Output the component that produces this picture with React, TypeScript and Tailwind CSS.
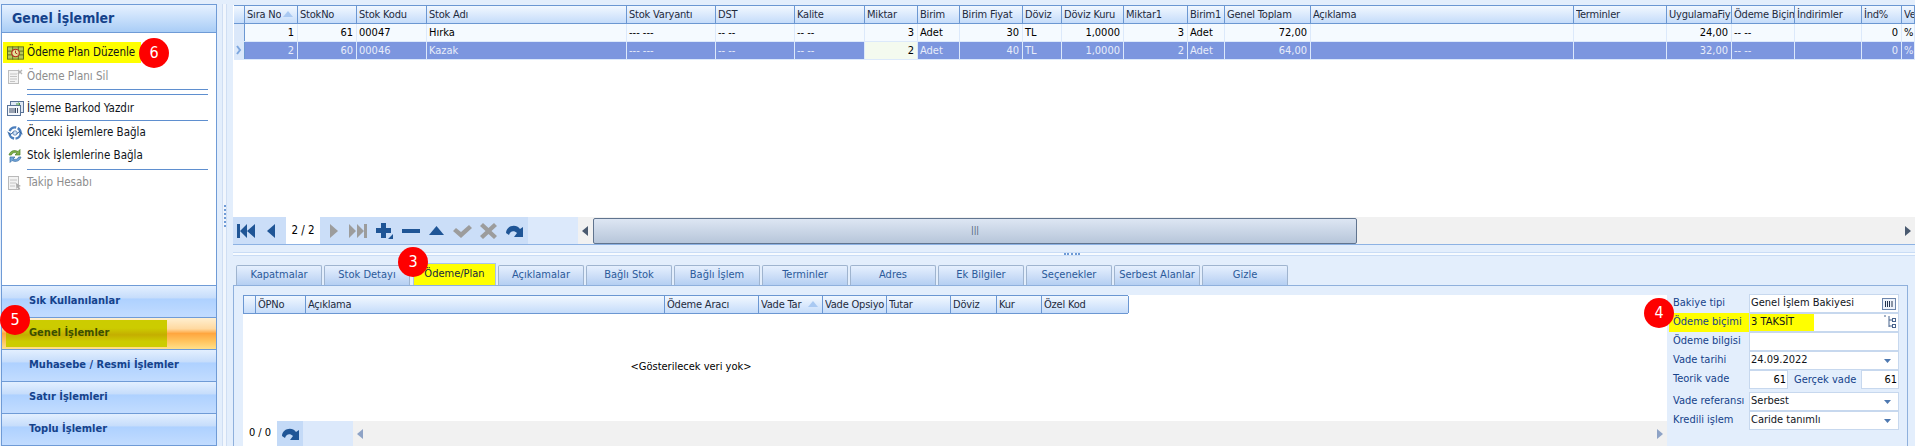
import type { ReactNode } from "react";

const font = "font-['DejaVu_Sans_Condensed','Liberation_Sans',sans-serif]";

const topCols = "grid grid-cols-[11px_53px_59px_70px_200px_89px_79px_70px_53px_42px_63px_39px_62px_64px_37px_86px_263px_93px_65px_63px_67px_40px_13px]";
const lowCols = "grid grid-cols-[12px_50px_359px_94px_64px_64px_64px_46px_45px_87px]";

const topHeaders = ["", "Sıra No", "StokNo", "Stok Kodu", "Stok Adı", "Stok Varyantı", "DST", "Kalite", "Miktar", "Birim", "Birim Fiyat", "Döviz", "Döviz Kuru", "Miktar1", "Birim1", "Genel Toplam", "Açıklama", "Terminler", "UygulamaFiy", "Ödeme Biçim", "İndirimler", "İnd%", "Ve"];
const lowHeaders = ["", "ÖPNo", "Açıklama", "Ödeme Aracı", "Vade Tar", "Vade Opsiyo", "Tutar", "Döviz", "Kur", "Özel Kod"];

// r = right aligned
const rows: { v: string; r?: boolean }[][] = [
  [{ v: "" }, { v: "1", r: true }, { v: "61", r: true }, { v: "00047" }, { v: "Hırka" }, { v: "--- ---" }, { v: "-- --" }, { v: "-- --" }, { v: "3", r: true }, { v: "Adet" }, { v: "30", r: true }, { v: "TL" }, { v: "1,0000", r: true }, { v: "3", r: true }, { v: "Adet" }, { v: "72,00", r: true }, { v: "" }, { v: "" }, { v: "24,00", r: true }, { v: "-- --" }, { v: "" }, { v: "0", r: true }, { v: "%" }],
  [{ v: "" }, { v: "2", r: true }, { v: "60", r: true }, { v: "00046" }, { v: "Kazak" }, { v: "--- ---" }, { v: "-- --" }, { v: "-- --" }, { v: "2", r: true }, { v: "Adet" }, { v: "40", r: true }, { v: "TL" }, { v: "1,0000", r: true }, { v: "2", r: true }, { v: "Adet" }, { v: "64,00", r: true }, { v: "" }, { v: "" }, { v: "32,00", r: true }, { v: "-- --" }, { v: "" }, { v: "0", r: true }, { v: "%" }],
];

const tabs = ["Kapatmalar", "Stok Detayı", "Ödeme/Plan", "Açıklamalar", "Bağlı Stok", "Bağlı İşlem", "Terminler", "Adres", "Ek Bilgiler", "Seçenekler", "Serbest Alanlar", "Gizle"];

function Badge({ n, className }: { n: string; className: string }) {
  return (
    <div className={`absolute z-20 flex h-[30px] w-[30px] items-center justify-center rounded-full bg-[#fe0000] text-[16px] text-white ${className}`}>
      {n}
    </div>
  );
}

function SortUp() {
  return (
    <svg width="10" height="6" viewBox="0 0 10 6" className="absolute right-[4px] top-[5px]">
      <path d="M5 0 L10 6 L0 6 Z" fill="#a9c9f2" />
    </svg>
  );
}

function Header({ label, sorted }: { label: string; sorted?: boolean }) {
  return (
    <div className="relative overflow-hidden whitespace-nowrap border-r border-[#6b97d2] pl-[2px] leading-[17px] tracking-[-0.2px] text-[#1e2b3d]">
      <div className={`overflow-hidden ${sorted ? "mr-[16px]" : ""}`}>{label}</div>
      {sorted && <SortUp />}
    </div>
  );
}

function IconPlan() {
  return (
    <svg width="17" height="14" viewBox="0 0 18 14">
      <rect x="0.5" y="0.5" width="17" height="13" fill="#b7c95a" stroke="#5d6f1d" />
      <path d="M6 0v14M12 0v14M0 5h18M0 9h18" stroke="#5d6f1d" />
      <circle cx="9" cy="7" r="4" fill="#e4e39a" stroke="#b3261e" strokeWidth="1.2" />
      <path d="M9 4.5V7l2 1" stroke="#b3261e" fill="none" />
    </svg>
  );
}

function IconDoc() {
  return (
    <svg width="16" height="16" viewBox="0 0 16 16">
      <rect x="1.5" y="1.5" width="10" height="13" fill="#f3f3f3" stroke="#bdbdbd" />
      <path d="M3 5h7M3 7.5h7M3 10h7M3 12.5h5" stroke="#c4c4c4" />
      <path d="M11 1l2 2 2-2M11 5l2-2 2 2" stroke="#b5b5b5" strokeWidth="1.4" fill="none" />
    </svg>
  );
}

function IconBarcode() {
  return (
    <svg width="17" height="16" viewBox="0 0 17 16">
      <rect x="3.5" y="0.5" width="13" height="11" fill="#dfe8f5" stroke="#5a7397" />
      <rect x="0.5" y="4.5" width="13" height="10" fill="#f4f7fb" stroke="#5a7397" />
      <path d="M3 7v5M5 7v5M7 7v5M8.5 7v5M10.5 7v5" stroke="#3d4d66" />
      <path d="M9 3h4l-1.500-1.500M13 3l-1.500 1.500" stroke="#4d9a3c" fill="none" />
    </svg>
  );
}

function IconLink() {
  return (
    <svg width="16" height="16" viewBox="0 0 16 16" fill="none">
      <circle cx="8" cy="8" r="5.6" stroke="#4c7fbd" strokeWidth="2.4" strokeDasharray="8 1.5" />
      <circle cx="8" cy="8" r="2.2" fill="#cfe0f5" stroke="#6f93bf" />
      <path d="M0.5 7l3 2.5 3-2.500M9.500 9l3-2.500 3 2.500" stroke="#2f5f9b" strokeWidth="1" />
    </svg>
  );
}

function IconSwap() {
  return (
    <svg width="16" height="16" viewBox="0 0 16 16" fill="none">
      <path d="M2 7C3 3 7 1.500 11 3.500L13 1.500V7H8L10 5C7 4 5 5 4.400 7Z" fill="#7fb04a" stroke="#4d7f2a" strokeWidth="0.7" />
      <path d="M14 9C13 13 9 14.500 5 12.500L3 14.500V9H8L6 11C9 12 11 11 11.600 9Z" fill="#6ea3d8" stroke="#3b6ea5" strokeWidth="0.7" />
    </svg>
  );
}

function IconTrack() {
  return (
    <svg width="16" height="16" viewBox="0 0 16 16" fill="none">
      <rect x="1.5" y="1.5" width="10" height="13" fill="#f3f3f3" stroke="#b9b9b9" />
      <path d="M3 5h7M3 8h6M3 11h5" stroke="#c4c4c4" />
      <path d="M9 8l5 3-2 .8 1.400 2.400-1.200.6-1.300-2.400L9.400 14Z" fill="#aaa" />
    </svg>
  );
}

function MenuItem({ icon, label, disabled }: { icon: ReactNode; label: string; disabled?: boolean }) {
  return (
    <div className={`flex h-[21px] items-center gap-[2px] pl-[4px] text-[11.500px] ${disabled ? "text-[#8d8d8d]" : "text-[#10141a]"}`}>
      <span className="flex w-[18px] justify-center">{icon}</span>
      <span className="pl-[1px]">{label}</span>
    </div>
  );
}

function Sidebar() {
  return (
    <aside className="relative flex h-full w-[217px] shrink-0 flex-col pl-[1px] pt-[4px]">
      <div className="flex min-h-0 flex-1 flex-col border border-[#6f9bd6] bg-white">
        <div className="h-[28px] border-b border-[#6f9bd6] bg-gradient-to-b from-[#e6f1ff] to-[#a9cdf6] pl-[10px] text-[14px] font-bold leading-[26px] text-[#15428b]">
          Genel İşlemler
        </div>
        <div className="flex-1 pt-[9px]">
          <div className="ml-[1px] h-[21px] w-[138px] whitespace-nowrap bg-[#ffff00]">
            <div className="-ml-[1px]">
              <MenuItem icon={<IconPlan />} label="Ödeme Plan Düzenle" />
            </div>
          </div>
          <div className="mt-[3px]">
            <MenuItem disabled icon={<IconDoc />} label="Ödeme Planı Sil" />
          </div>
          <div className="ml-[25px] mr-[8px] mt-[2px] h-[6px] border-y border-[#5f8fcf]" />
          <div className="mt-[3px]">
            <MenuItem icon={<IconBarcode />} label="İşleme Barkod Yazdır" />
          </div>
          <div className="ml-[25px] mr-[8px] mt-[1px] border-t border-[#5f8fcf]" />
          <div className="mt-[1px]">
            <MenuItem icon={<IconLink />} label="Önceki İşlemlere Bağla" />
          </div>
          <div className="mt-[2px]">
            <MenuItem icon={<IconSwap />} label="Stok İşlemlerine Bağla" />
          </div>
          <div className="ml-[25px] mr-[8px] mt-[3px] border-t border-[#5f8fcf]" />
          <div className="mt-[2px]">
            <MenuItem disabled icon={<IconTrack />} label="Takip Hesabı" />
          </div>
        </div>
        <AccordionRow label="Sık Kullanılanlar" />
        <AccordionRow label="Genel İşlemler" active />
        <AccordionRow label="Muhasebe / Resmi İşlemler" />
        <AccordionRow label="Satır İşlemleri" />
        <AccordionRow label="Toplu İşlemler" />
      </div>
      <Badge n="6" className="left-[139px] top-[38px]" />
      <Badge n="5" className="left-0 top-[305px]" />
    </aside>
  );
}

function AccordionRow({ label, active }: { label: string; active?: boolean }) {
  return (
    <div
      className={`relative h-[32px] shrink-0 border-t border-[#6f9bd6] pl-[27px] text-[11px] font-bold leading-[30px] ${
        active
          ? "bg-[linear-gradient(#ffefd0,#ffd9a0_35%,#ffa63f_50%,#ffc45e_75%,#ffe08a)] text-[#3c4f00]"
          : "bg-[linear-gradient(#e3efff,#c6ddfb_38%,#aed1ff_42%,#c2dcff)] text-[#15428b]"
      }`}
    >
      {/* yellow marker from the annotated screenshot */}
      {active && <div className="absolute left-[4px] top-[2px] h-[27px] w-[161px] bg-[linear-gradient(#cccc00,#cccc00_30%,#c4ae00_55%,#cccc00_80%)]" />}
      <span className="relative">{label}</span>
    </div>
  );
}

function NavIcon({ d, off, w }: { d: string; off?: boolean; w: number }) {
  return (
    <svg width={w} height="16" viewBox={`0 0 ${w} 16`} className="shrink-0">
      <path d={d} fill={off ? "#9c9c9c" : "#1f5596"} />
    </svg>
  );
}

const redo = "M1 10C1 3 11 0 15 6l3-2v10h-9l3-4C9 7 5 8 4 12z";

function Toolbar() {
  return (
    <div className="flex h-[28px] shrink-0 border-b border-[#8db2e3] bg-[#dce9fb]">
      <div className="flex w-[345px] shrink-0 items-center">
        <div className="flex h-full w-[53px] items-center gap-[12px] bg-[#cbdef8] pl-[4px]">
          <NavIcon d="M0 1h3v14H0zM3 8l7-7v14zM10 8l8-7v14z" w={18} />
          <NavIcon d="M8 1v14L0 8z" w={8} />
        </div>
        <div className="flex h-full w-[34px] items-center justify-center bg-white text-[11.500px] text-black">2 / 2</div>
        <div className="flex h-full w-[208px] items-center gap-[8px] bg-[#cbdef8] pl-[10px]">
          <NavIcon off d="M0 1v14l8-7z" w={8} />
          <div className="ml-[3px]">
            <NavIcon off d="M0 1l7 7-7 7zM8 1l7 7-7 7zM15 1h3v14h-3z" w={18} />
          </div>
          <NavIcon d="M6 0h5v5h5v5h-5v5H6v-5H1V5h5zM18 16h-5l5-5z" w={18} />
          <div className="ml-[1px]">
            <NavIcon d="M0 6h18v4H0z" w={18} />
          </div>
          <div className="ml-[1px]">
            <NavIcon d="M7.500 3L15 12H0z" w={15} />
          </div>
          <div className="ml-[1px]">
            <NavIcon off d="M0 8l3-3 5 4L16 2l3 3L8 15z" w={19} />
          </div>
          <NavIcon off d="M0 3l3-3 5.500 5L14 0l3 3-5.500 5 5.500 5-3 3-5.500-5L3 16l-3-3 5.500-5z" w={17} />
          <NavIcon d={redo} w={19} />
        </div>
      </div>
      <Scrollbar className="flex-1" thumb />
    </div>
  );
}

function Scrollbar({ className, thumb }: { className: string; thumb?: boolean }) {
  return (
    <div className={`flex h-full items-center justify-between bg-[#f1f1f1] px-[4px] ${className}`}>
      <svg width="6" height="10" viewBox="0 0 6 10">
        <path d="M6 0v10L0 5z" fill={thumb ? "#4a5a70" : "#8ea3c6"} />
      </svg>
      {thumb && (
        <div className="ml-[5px] flex h-[26px] w-[764px] items-center justify-center rounded-[2px] border border-[#60748f] bg-gradient-to-b from-[#dde6f3] to-[#b7c6da]">
          <span className="text-[9px] leading-none text-[#4a5a70]">|||</span>
        </div>
      )}
      {thumb && <div className="flex-1" />}
      <svg width="6" height="10" viewBox="0 0 6 10">
        <path d="M0 0v10l6-5z" fill={thumb ? "#4a5a70" : "#8ea3c6"} />
      </svg>
    </div>
  );
}

function TopGrid() {
  return (
    <div className="h-[212px] shrink-0 overflow-hidden bg-white pl-[1px] text-[11px]">
      <div className={`${topCols} h-[19px] border-y border-[#6b97d2] bg-gradient-to-b from-[#f2f8ff] to-[#c5dcfa]`}>
        {topHeaders.map((h, i) => (
          <Header key={i} label={h} sorted={i === 1} />
        ))}
      </div>
      {rows.map((row, ri) => (
        <div key={ri} className={`${topCols} h-[18px] border-b ${ri === 0 ? "border-[#dce9fb] bg-[#f5faff] text-black" : "border-[#dce9fb] bg-[#7c96df] text-[#e8edfa]"}`}>
          {row.map((c, ci) => {
            const editing = ri === 1 && ci === 8;
            const lead = ci === 0;
            return (
              <div
                key={ci}
                className={`overflow-hidden whitespace-nowrap border-r leading-[17px] ${c.r ? "pr-[3px] text-right" : "pl-[2px] text-left"} ${
                  lead ? "border-[#6b97d2] bg-[#dbe8fa]" : "border-[#dce9fb]"
                } ${editing ? "bg-[#f4faef] text-black" : ""}`}
              >
                {lead && ri === 1 ? (
                  <svg width="6" height="10" viewBox="0 0 6 10" className="mt-[3px]" fill="none">
                    <path d="M1 1l3 4-3 4" stroke="#7ea7de" strokeWidth="2" />
                  </svg>
                ) : (
                  c.v
                )}
              </div>
            );
          })}
        </div>
      ))}
    </div>
  );
}

function Tab({ label, active }: { label: string; active: boolean }) {
  if (active) {
    return (
      <div className="ml-[1px] flex h-[22px] w-[83px] shrink-0 items-center justify-center border border-b-0 border-[#a9c4e8] bg-[#ffff00] text-[11px] text-[#15283f]">
        {label}
      </div>
    );
  }
  return (
    <div className="flex h-[20px] w-[86px] shrink-0 items-center justify-center rounded-t-[2px] border border-b-0 border-[#9fb4cf] bg-[linear-gradient(#e6f0fe,#c9dcf7_60%,#b5cff2)] text-[11px] text-[#2b5a9a]">
      {label}
    </div>
  );
}

function FormRow({ label, children, highlight }: { label: string; children: ReactNode; highlight?: boolean }) {
  return (
    <div className="flex h-[19px] items-center">
      <div className={`h-full w-[80px] shrink-0 whitespace-nowrap pl-[4px] leading-[18px] text-[#15428b] ${highlight ? "bg-[#ffff00]" : ""}`}>{label}</div>
      <div className="relative flex h-full w-[150px] items-center border border-[#c7d8ee] bg-white pl-[1px] text-[#10141a]">{children}</div>
    </div>
  );
}

function Caret() {
  return (
    <svg width="7" height="4" viewBox="0 0 7 4" className="absolute right-[7px] top-[7px]">
      <path d="M0 0h7L3.500 4z" fill="#4d78b0" />
    </svg>
  );
}

function Form() {
  return (
    <div className="relative w-[240px] shrink-0 pl-[2px] text-[11px]">
      <div className="-mt-[1px]">
        <FormRow label="Bakiye tipi">
          Genel İşlem Bakiyesi
          <svg width="14" height="12" viewBox="0 0 14 12" className="absolute right-[2px] top-[3px]">
            <rect x="0.5" y="0.5" width="13" height="11" fill="#eef3fb" stroke="#6c85ab" />
            <path d="M3.500 3v6M5.500 3v6M7.500 3v6M10 3v6" stroke="#24344f" />
          </svg>
        </FormRow>
        <FormRow label="Ödeme biçimi" highlight>
          <span className="absolute inset-y-0 left-0 w-[64px] bg-[#ffff00]" />
          <span className="relative">3 TAKSİT</span>
          <svg width="14" height="14" viewBox="0 0 14 14" fill="none" stroke="#47628c" className="absolute right-[1px] top-[1px]">
            <path d="M1 1h2M6 1v11M6 5h3M6 11h3" />
            <rect x="9.500" y="3.500" width="3" height="3" />
            <rect x="9.500" y="9.500" width="3" height="3" />
          </svg>
        </FormRow>
        <FormRow label="Ödeme bilgisi">{""}</FormRow>
        <FormRow label="Vade tarihi">
          24.09.2022
          <Caret />
        </FormRow>
        <div className="flex h-[19px] items-center">
          <div className="h-full w-[80px] shrink-0 pl-[4px] leading-[18px] text-[#15428b]">Teorik vade</div>
          <div className="h-full w-[39px] border border-[#c7d8ee] bg-white pr-[1px] text-right leading-[17px]">61</div>
          <div className="h-full w-[73px] whitespace-nowrap pl-[6px] leading-[19px] text-[#15428b]">Gerçek vade</div>
          <div className="h-full w-[38px] border border-[#c7d8ee] bg-white pr-[1px] text-right leading-[17px]">61</div>
        </div>
        <div className="mt-[3px]">
          <FormRow label="Vade referansı">
            Serbest
            <Caret />
          </FormRow>
        </div>
        <FormRow label="Kredili işlem">
          Caride tanımlı
          <Caret />
        </FormRow>
      </div>
    </div>
  );
}

function LowerGrid() {
  return (
    <div className="flex w-[1424px] shrink-0 flex-col bg-white text-[11px]">
      <div className={`${lowCols} h-[19px] w-[885px] border-y border-l border-[#6b97d2] bg-gradient-to-b from-[#f2f8ff] to-[#c5dcfa]`}>
        {lowHeaders.map((h, i) => (
          <Header key={i} label={h} sorted={i === 4} />
        ))}
      </div>
      <div className="flex flex-1 items-center">
        <span className="w-[896px] text-center text-black">&lt;Gösterilecek veri yok&gt;</span>
      </div>
      <div className="flex h-[25px] shrink-0">
        <div className="flex w-[34px] items-center justify-center text-black">0 / 0</div>
        <div className="flex w-[76px] items-center bg-[#dce9fb]">
          <div className="flex h-full w-[26px] items-center justify-center bg-[#c4daf7]">
            <NavIcon d={redo} w={19} />
          </div>
        </div>
        <Scrollbar className="flex-1" />
      </div>
    </div>
  );
}

export default function App() {
  return (
    <div className={`relative flex h-[446px] w-[1915px] overflow-hidden bg-[#e3eefc] ${font}`}>
      <Sidebar />
      <div className="relative w-[16px] shrink-0">
        <div className="absolute left-[5px] top-[4px] h-[442px] w-[5px] border-x border-[#cfdef3] bg-[#f1f6fd]" />
        <div className="absolute left-[7px] top-[205px] h-[22px] w-[2px] border-l-2 border-dotted border-[#6f9bd6]" />
      </div>
      <main className="flex min-w-0 flex-1 flex-col pt-[5px]">
        <TopGrid />
        <Toolbar />
        <div className="relative h-[18px] shrink-0">
          <div className="absolute inset-x-0 top-[7px] h-[4px] border-y border-[#c9dcf5] bg-[#f7fbff]" />
          <div className="absolute left-[831px] top-[8px] h-[2px] w-[16px] border-t-2 border-dotted border-[#6f9bd6]" />
        </div>
        <div className="relative flex h-[22px] shrink-0 items-end gap-[2px] pl-[3px]">
          {tabs.map((t) => (
            <Tab key={t} label={t} active={t === "Ödeme/Plan"} />
          ))}
          <Badge n="3" className="left-[165px] -top-[16px]" />
        </div>
        <div className="flex min-h-0 w-[1675px] flex-1 border-x border-t border-[#8fb0dc] pl-[9px] pt-[9px]">
          <LowerGrid />
          <Form />
        </div>
      </main>
      <Badge n="4" className="left-[1644px] top-[298px]" />
    </div>
  );
}
